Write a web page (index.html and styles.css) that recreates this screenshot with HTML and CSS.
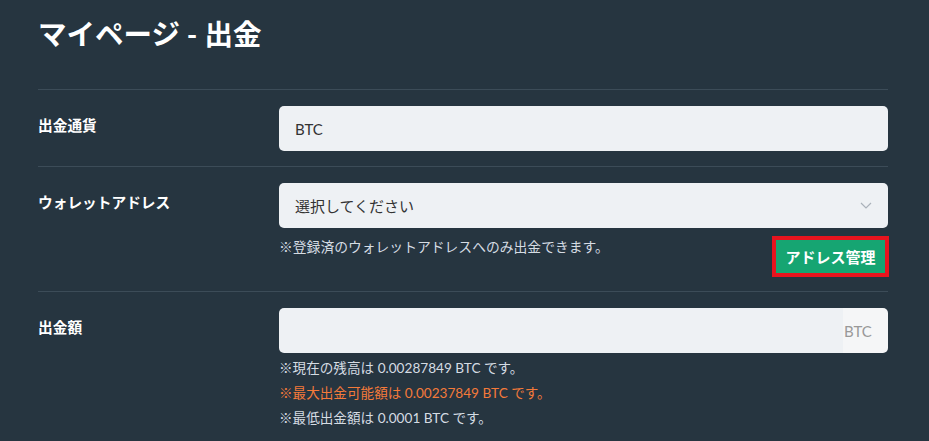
FILE: index.html
```html
<!DOCTYPE html>
<html lang="ja">
<head>
    <meta charset="UTF-8">
    <meta name="viewport" content="width=device-width, initial-scale=1.0">
    <title>マイページ - 出金</title>
    <link rel="stylesheet" href="styles.css">
</head>
<body>

<div class="container">
    <h1>マイページ - 出金</h1>

    <form class="withdraw-form">
        <div class="form-row">
            <label class="row-label">出金通貨</label>
            <div class="row-body">
                <div class="field">BTC</div>
            </div>
        </div>

        <div class="form-row row-wallet">
            <label class="row-label">ウォレットアドレス</label>
            <div class="row-body">
                <div class="field select-field">
                    <span>選択してください</span>
                    <svg class="chevron" width="12" height="7" viewBox="0 0 12 7">
                        <path d="M1 1 L6 6 L11 1" fill="none" stroke="#aab2ba" stroke-width="1.2"/>
                    </svg>
                </div>
                <div class="hint-line">
                    <p class="note note-hint">※登録済のウォレットアドレスへのみ出金できます。</p>
                    <button type="button" class="btn-address">アドレス管理</button>
                </div>
            </div>
        </div>

        <div class="form-row row-amount">
            <label class="row-label">出金額</label>
            <div class="row-body">
                <div class="amount-group">
                    <input type="text" class="amount-input">
                    <span class="unit">BTC</span>
                </div>
                <p class="note">※現在の残高は 0.00287849 BTC です。</p>
                <p class="note note-warn">※最大出金可能額は 0.00237849 BTC です。</p>
                <p class="note">※最低出金額は 0.0001 BTC です。</p>
            </div>
        </div>
    </form>
</div>

</body>
</html>
```

FILE: styles.css
```css
* {
    margin: 0;
    padding: 0;
    box-sizing: border-box;
    font-family: Lato, "Noto Sans CJK JP", sans-serif;
}

body {
    background-color: #263540;
    color: #fff;
}

.container {
    padding: 15px 41px 0 38px;
}

h1 {
    font-size: 28.5px;
    font-weight: bold;
    line-height: 38px;
    color: #fff;
    margin-bottom: 36px;
}

.form-row {
    display: flex;
    border-top: 1px solid #3c4c58;
    padding: 16px 0 15px;
}

.row-label {
    width: 241px;
    flex-shrink: 0;
    padding-top: 9px;
    font-size: 14.7px;
    font-weight: bold;
    line-height: 20px;
    color: #fff;
}

.row-body {
    flex: 1;
}

.field {
    height: 45px;
    background-color: #eef1f4;
    border-radius: 5px;
    padding: 0 16px;
    display: flex;
    align-items: center;
    font-size: 15px;
    color: #333;
}

.select-field {
    justify-content: space-between;
}

.row-wallet {
    padding-bottom: 14px;
}

.hint-line {
    display: flex;
    justify-content: space-between;
    align-items: flex-start;
    margin-top: 8px;
}

.note {
    font-size: 13.6px;
    line-height: 25px;
    color: #d5dce3;
}

.hint-line .note-hint {
    font-size: 13.8px;
    line-height: 22px;
}

.note-warn {
    color: #f47a3a;
}

.btn-address {
    background-color: #16a572;
    color: #fff;
    border: 4px solid #e8141e;
    height: 41px;
    width: 117px;
    margin-right: -1px;
    font-size: 15px;
    font-weight: bold;
    cursor: pointer;
}

.amount-group {
    display: flex;
    height: 45px;
    border-radius: 5px;
    overflow: hidden;
    margin-bottom: 3px;
}

.amount-input {
    flex: 1;
    border: none;
    outline: none;
    background-color: #eef1f4;
    padding: 0 16px;
    font-size: 15px;
}

.unit {
    width: 45px;
    padding-left: 1px;
    background-color: #f5f6f7;
    color: #999;
    font-size: 15px;
    display: flex;
    align-items: center;
}
```
